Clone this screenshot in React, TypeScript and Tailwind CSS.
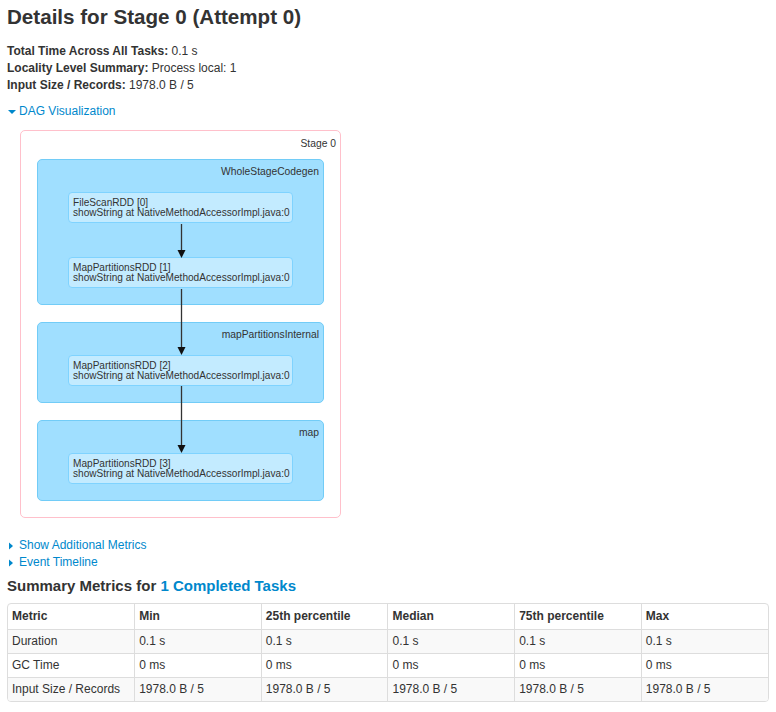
const nodes = [
    { title: 'FileScanRDD [0]', cluster: 0 },
    { title: 'MapPartitionsRDD [1]', cluster: 0 },
    { title: 'MapPartitionsRDD [2]', cluster: 1 },
    { title: 'MapPartitionsRDD [3]', cluster: 2 },
];

const clusters = ['WholeStageCodegen', 'mapPartitionsInternal', 'map'];

const rows = [
    ['Duration', '0.1 s', '0.1 s', '0.1 s', '0.1 s', '0.1 s'],
    ['GC Time', '0 ms', '0 ms', '0 ms', '0 ms', '0 ms'],
    ['Input Size / Records', '1978.0 B / 5', '1978.0 B / 5', '1978.0 B / 5', '1978.0 B / 5', '1978.0 B / 5'],
];

const headers = ['Metric', 'Min', '25th percentile', 'Median', '75th percentile', 'Max'];

const Caret = ({ open }: { open?: boolean }) => (
    <svg width="12" height="10" viewBox="0 0 12 10" className="shrink-0">
        {open ? <path d="M1 3 L9 3 L5 7 Z" fill="#0088cc" /> : <path d="M2 1.5 L6 5 L2 8.5 Z" fill="#0088cc" />}
    </svg>
);

const RddNode = ({ title }: { title: string }) => (
    <div className="mx-[30px] h-[31px] flex flex-col justify-center px-[4px] rounded-[4px] bg-[#c3ebff] border border-[#7fd3ff] text-[10.1px] leading-[10px] text-[#333] whitespace-nowrap">
        <div>{title}</div>
        <div>showString at NativeMethodAccessorImpl.java:0</div>
    </div>
);

const Arrow = ({ y1, y2 }: { y1: number; y2: number }) => (
    <g>
        <line x1="160.5" y1={y1} x2="160.5" y2={y2 - 7} stroke="#333" strokeWidth="1.3" />
        <path d={`M156.5 ${y2 - 8} L164.5 ${y2 - 8} L160.5 ${y2} Z`} fill="#111" />
    </g>
);

export default function App() {
    return (
        <div className="min-h-[712px] bg-white pl-[7px] pr-[7px] text-[#333] text-[12px] leading-[17px]" style={{ fontFamily: '"Liberation Sans", Arial, sans-serif' }}>
            <h3 className="pt-[4px] text-[20.6px] leading-[25px] font-bold text-[#333]">Details for Stage 0 (Attempt 0)</h3>

            <ul className="mt-[14px]">
                <li><strong>Total Time Across All Tasks:</strong> 0.1 s</li>
                <li><strong>Locality Level Summary:</strong> Process local: 1</li>
                <li><strong>Input Size / Records:</strong> 1978.0 B / 5</li>
            </ul>

            <div className="mt-[9px] flex items-center text-[#0088cc]">
                <Caret open />
                <span>DAG Visualization</span>
            </div>

            {/* DAG */}
            <div className="relative mt-[10px] ml-[13px] w-[321px] h-[388px] rounded-[5px] border border-[#ffc0cb] bg-white">
                <div className="h-[28px] pr-[4px] pt-[4px] text-right text-[10.3px] leading-[17px]">Stage 0</div>
                <div className="flex flex-col gap-[17px] px-[16px]">
                    {clusters.map((c, i) => (
                        <div key={c} className="rounded-[5px] bg-[#a0dfff] border border-[#72ccf7] pb-[16px]">
                            <div className="h-[32px] pr-[4px] pt-[3px] text-right text-[10.3px] leading-[17px]">{c}</div>
                            <div className="flex flex-col gap-[34px]">
                                {nodes.filter(n => n.cluster === i).map(n => <RddNode key={n.title} title={n.title} />)}
                            </div>
                        </div>
                    ))}
                </div>
                <svg className="absolute left-0 top-0 pointer-events-none" width="321" height="388">
                    <Arrow y1={93} y2={127} />
                    <Arrow y1={158} y2={224} />
                    <Arrow y1={255} y2={322} />
                </svg>
            </div>

            <div className="mt-[19px] text-[#0088cc]">
                <div className="flex items-center"><Caret /><span>Show Additional Metrics</span></div>
                <div className="flex items-center"><Caret /><span>Event Timeline</span></div>
            </div>

            <h4 className="mt-[6px] text-[15px] leading-[18px] font-bold">
                Summary Metrics for <span className="text-[#0088cc]">1 Completed Tasks</span>
            </h4>

            <div className="mt-[8px] w-[762px] rounded-[4px] border border-[#ddd] overflow-hidden">
                <table className="w-full table-fixed border-collapse">
                    <thead>
                        <tr>
                            {headers.map((h, i) => (
                                <th key={h} className={`text-left font-bold px-[4px] py-[4px] leading-[17px] border-[#ddd] ${i > 0 ? 'border-l' : ''}`}>{h}</th>
                            ))}
                        </tr>
                    </thead>
                    <tbody>
                        {rows.map((r, ri) => (
                            <tr key={r[0]} className={ri % 2 === 0 ? 'bg-[#f9f9f9]' : 'bg-white'}>
                                {r.map((v, i) => (
                                    <td key={i} className={`px-[4px] py-[3px] leading-[17px] border-t border-[#ddd] ${i > 0 ? 'border-l' : ''}`}>{v}</td>
                                ))}
                            </tr>
                        ))}
                    </tbody>
                </table>
            </div>
        </div>
    );
}
